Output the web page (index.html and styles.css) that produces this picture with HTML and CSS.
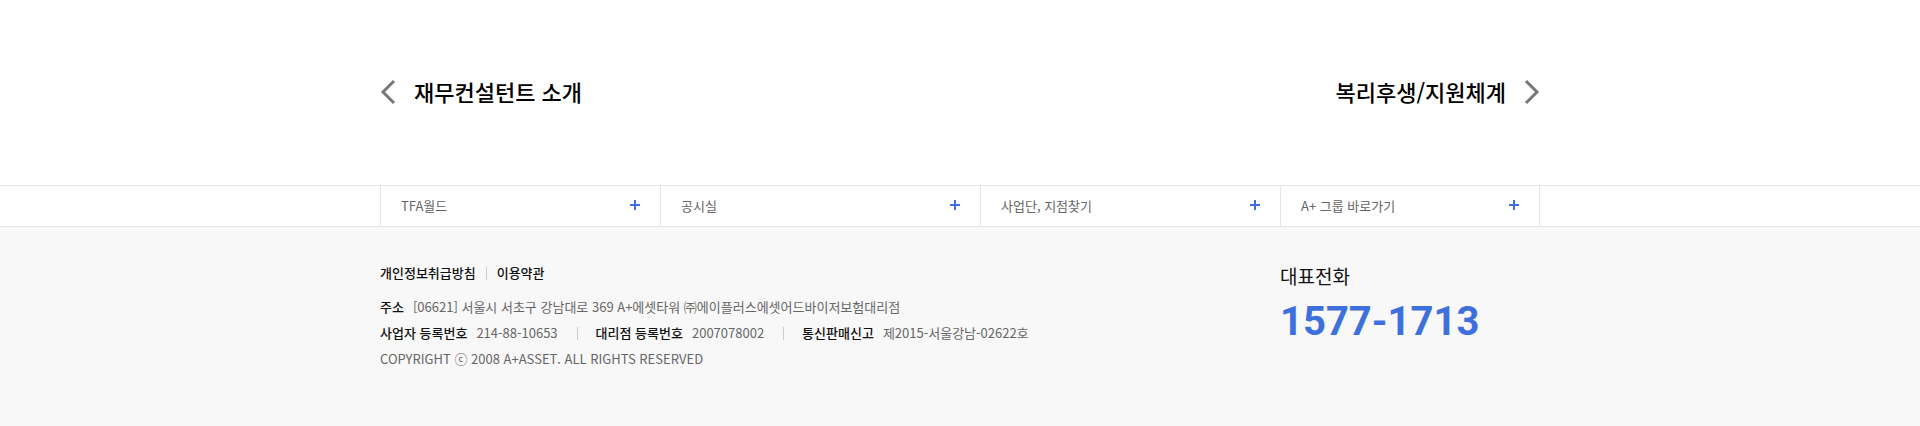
FILE: index.html
```html
<!DOCTYPE html>
<html lang="ko">
<head>
<meta charset="utf-8">
<meta name="viewport" content="width=device-width, initial-scale=1">
<title>A+에셋</title>
<link rel="stylesheet" href="styles.css">
</head>
<body>
<nav class="pager container" aria-label="이전 다음">
  <a class="pager-link" href="#"><svg class="chevron" viewBox="0 0 16 26" aria-hidden="true"><path d="M14 2 3 13l11 11"/></svg><span>재무컨설턴트 소개</span></a>
  <a class="pager-link" href="#"><span>복리후생/지원체계</span><svg class="chevron" viewBox="0 0 16 26" aria-hidden="true"><path d="m2 2 11 11L2 24"/></svg></a>
</nav>
<footer>
  <div class="family">
    <div class="family-list container">
      <button class="family-item" type="button"><span>TFA월드</span><svg class="plus" viewBox="0 0 10 10" aria-hidden="true"><path d="M5 0v10M0 5h10"/></svg></button>
      <button class="family-item" type="button"><span>공시실</span><svg class="plus" viewBox="0 0 10 10" aria-hidden="true"><path d="M5 0v10M0 5h10"/></svg></button>
      <button class="family-item" type="button"><span>사업단, 지점찾기</span><svg class="plus" viewBox="0 0 10 10" aria-hidden="true"><path d="M5 0v10M0 5h10"/></svg></button>
      <button class="family-item" type="button"><span>A+ 그룹 바로가기</span><svg class="plus" viewBox="0 0 10 10" aria-hidden="true"><path d="M5 0v10M0 5h10"/></svg></button>
    </div>
  </div>
  <div class="info">
    <div class="info-grid container">
      <div class="company">
        <div class="policies"><a href="#">개인정보취급방침</a><a href="#">이용약관</a></div>
        <dl class="facts"><div class="fact"><dt>주소</dt><dd>[06621] 서울시 서초구 강남대로 369 A+에셋타워 ㈜에이플러스에셋어드바이저보험대리점</dd></div></dl>
        <dl class="facts">
          <div class="fact"><dt>사업자 등록번호</dt><dd>214-88-10653</dd></div>
          <div class="fact"><dt>대리점 등록번호</dt><dd>2007078002</dd></div>
          <div class="fact"><dt>통신판매신고</dt><dd>제2015-서울강남-02622호</dd></div>
        </dl>
        <p class="copyright">COPYRIGHT ⓒ 2008 A+ASSET. ALL RIGHTS RESERVED</p>
      </div>
      <div class="phone">
        <p class="phone-label">대표전화</p>
        <a class="phone-number" href="tel:1577-1713">1577-1713</a>
      </div>
    </div>
  </div>
</footer>
</body>
</html>
```
FILE: styles.css
```css
* { box-sizing: border-box; }
body {
  margin: 0;
  background: #fff;
  color: #666;
  font: 13px/26px "Noto Sans CJK KR", sans-serif;
}
a { color: inherit; text-decoration: none; }
p, dl, dd { margin: 0; }
.container { width: 100%; max-width: 1160px; margin: 0 auto; }

.pager {
  display: flex;
  justify-content: space-between;
  padding: 72px 0 73px;
}
.pager-link {
  display: flex;
  align-items: center;
  gap: 18px;
  color: #000;
  font-size: 22px;
  line-height: 38px;
  min-height: 40px;
  font-weight: 500;
}
.pager-link span { padding-bottom: 2px; }
.chevron { width: 16px; height: 26px; fill: none; stroke: #777; stroke-width: 3; }

.family { border: solid #e5e5e5; border-width: 1px 0; }
.family-list {
  display: grid;
  grid-template-columns: 280fr 320fr 300fr 260fr;
}
.family-item {
  display: flex;
  align-items: center;
  justify-content: space-between;
  min-height: 40px;
  padding: 0 20px 2px;
  border: 0;
  border-left: 1px solid #e5e5e5;
  background: none;
  color: #666;
  font: inherit;
  text-align: left;
}
.family-item:last-child { border-right: 1px solid #e5e5e5; }
.family-item span { padding-top: 2px; }
.plus { width: 10px; height: 10px; stroke: #3d70dd; stroke-width: 2; }

.info { background: #f8f8f8; }
.info-grid {
  display: grid;
  grid-template-columns: 900fr 260fr;
  padding: 33px 0 54px;
}
.policies { display: flex; color: #111; font-weight: 500; margin-bottom: 8px; }
.policies a { display: flex; align-items: center; }
.policies a + a::before {
  content: "";
  width: 1px;
  height: 13px;
  margin: 0 10px;
  background: #ccc;
}
.facts { display: flex; flex-wrap: wrap; }
.fact { display: flex; align-items: center; gap: 9px; }
.fact + .fact::before {
  content: "";
  width: 1px;
  height: 13px;
  margin: 0 9px 0 19px;
  background: #ccc;
}
.fact dt { color: #111; font-weight: 500; }
.phone-label { color: #111; font-size: 19px; line-height: 32px; }
.phone-number {
  display: block;
  color: #3d70dd;
  font: 700 40px/60px Roboto, sans-serif;
}
```
